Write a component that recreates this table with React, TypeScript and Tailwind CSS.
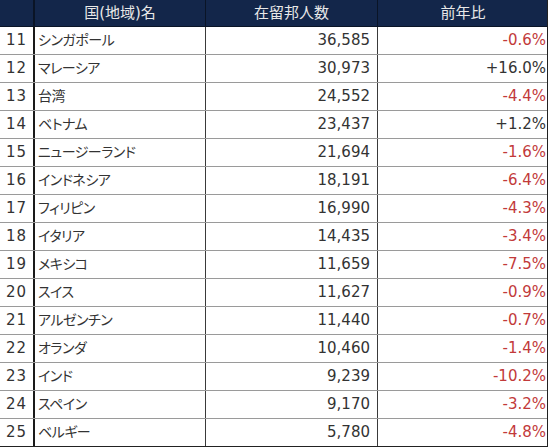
const rows: [number, string, string, string][] = [
  [11, "シンガポール", "36,585", "-0.6%"],
  [12, "マレーシア", "30,973", "+16.0%"],
  [13, "台湾", "24,552", "-4.4%"],
  [14, "ベトナム", "23,437", "+1.2%"],
  [15, "ニュージーランド", "21,694", "-1.6%"],
  [16, "インドネシア", "18,191", "-6.4%"],
  [17, "フィリピン", "16,990", "-4.3%"],
  [18, "イタリア", "14,435", "-3.4%"],
  [19, "メキシコ", "11,659", "-7.5%"],
  [20, "スイス", "11,627", "-0.9%"],
  [21, "アルゼンチン", "11,440", "-0.7%"],
  [22, "オランダ", "10,460", "-1.4%"],
  [23, "インド", "9,239", "-10.2%"],
  [24, "スペイン", "9,170", "-3.2%"],
  [25, "ベルギー", "5,780", "-4.8%"],
];

export default function App() {
  return (
    <div
      className="w-[550px] h-[448px] bg-white overflow-hidden text-[15px] text-[#333] [font-feature-settings:'palt']"
      style={{ fontFamily: '"DejaVu Sans", "Noto Sans CJK JP", sans-serif' }}
    >
      <div className="w-[548px] border-r border-[#222]">
        {/* header */}
        <div className="grid grid-cols-[35px_171px_172px_170px] h-[27px] bg-[#13264a] text-[#e8e8e8] border-b border-[#0a1426]">
          <div className="border-r-2 border-[#0a1426]" />
          <div className="flex items-center justify-center border-r border-[#0a1426]">国(地域)名</div>
          <div className="flex items-center justify-center border-r border-[#0a1426]">在留邦人数</div>
          <div className="flex items-center justify-center">前年比</div>
        </div>

        {rows.map(([rank, name, count, diff], i) => (
          <div
            key={rank}
            className={
              "grid grid-cols-[35px_171px_172px_170px] h-[28px] border-b " +
              (i === rows.length - 1 ? "border-[#222]" : "border-[#9a9a9a]")
            }
          >
            <div className="flex items-center justify-center border-r-2 border-[#1a1a1a] tracking-[1px]">{rank}</div>
            <div className="flex items-center pl-[3px] border-r border-[#3a3a3a] text-[14px] tracking-[-0.5px]">{name}</div>
            <div className="flex items-center justify-end pr-[7px] border-r border-[#3a3a3a]">{count}</div>
            <div
              className={
                "flex items-center justify-end pr-[2px] " +
                (diff.startsWith("-") ? "text-[#c23a3a]" : "text-[#333]")
              }
            >
              {diff}
            </div>
          </div>
        ))}
      </div>
    </div>
  );
}
